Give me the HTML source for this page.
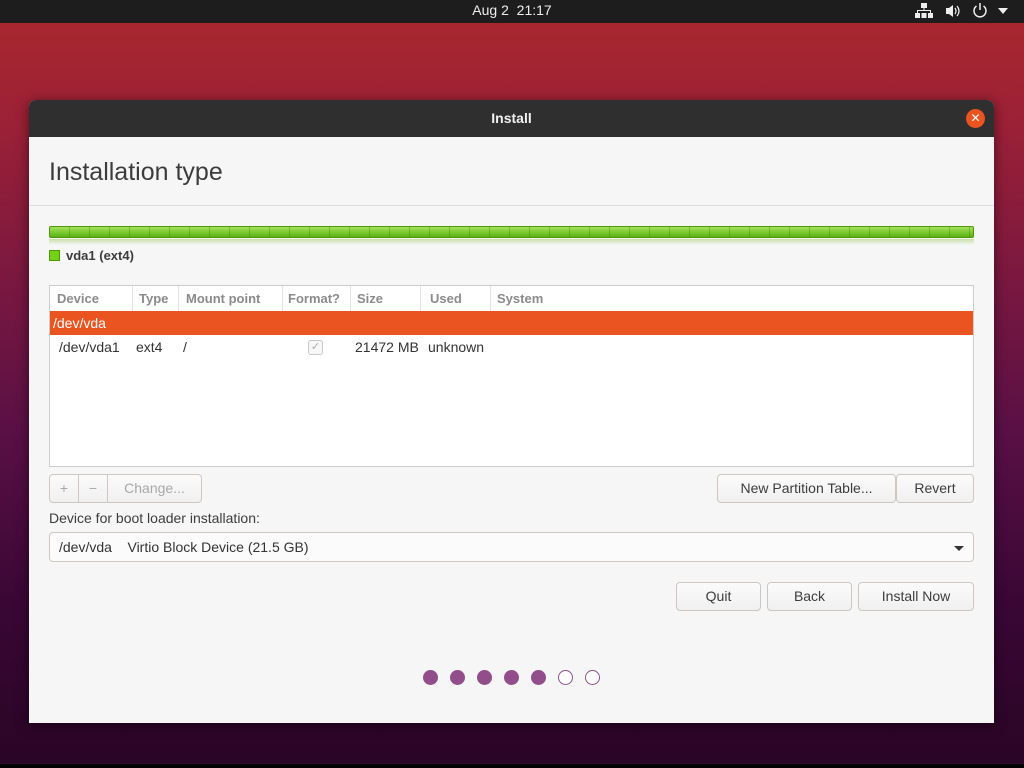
<!DOCTYPE html>
<html><head><meta charset="utf-8"><style>
*{box-sizing:border-box;margin:0;padding:0}
body{width:1024px;height:768px;overflow:hidden;font-family:"Liberation Sans","DejaVu Sans",sans-serif;position:relative;
background:linear-gradient(180deg,#a8272f 24px,#9c2136 120px,#7a1840 280px,#5a1045 430px,#3a0735 600px,#2a0526 760px);}
#top{position:absolute;left:0;top:0;width:1024px;height:23px;background:#1d1d1d;color:#eee;font-size:14px}
#top .clock{position:absolute;left:0;width:1024px;text-align:center;top:2px}
#bot{position:absolute;left:0;top:764px;width:1024px;height:4px;background:#000}
#win{position:absolute;left:29px;top:100px;width:965px;height:623px;background:#f6f6f6;border-radius:7px 7px 0 0;overflow:hidden;box-shadow:0 2px 12px rgba(0,0,0,.5)}
#tb{height:37px;background:#2f2f2f;color:#f0f0f0;font-weight:bold;font-size:14px;text-align:center;line-height:37px;position:relative}
#close{position:absolute;right:9px;top:9px;width:19px;height:19px;border-radius:50%;background:#e95420;color:#fff;font-size:12px;line-height:19px;text-align:center;font-weight:normal}
h1{position:absolute;left:20px;top:58px;font-size:25px;font-weight:normal;color:#3c3c3c}
.hr{position:absolute;left:0;top:105px;width:965px;height:1px;background:#dedede}
#bar{position:absolute;left:20px;top:126px;width:925px;height:12px;border:1px solid #4e9a06;border-radius:2px;
background:repeating-linear-gradient(90deg,transparent 0 19px,rgba(60,120,0,.35) 19px 20px),linear-gradient(#a6e060,#73c72a 60%,#5fae1c)}
#barsh{position:absolute;left:20px;top:139px;width:925px;height:6px;background:linear-gradient(#c7e0a8,rgba(246,246,246,0))}
#leg{position:absolute;left:20px;top:148px;font-size:13px;font-weight:bold;color:#3c3c3c}
#leg span{display:inline-block;width:11px;height:11px;background:#73d216;border:1px solid #4e9a06;vertical-align:-1px;margin-right:6px}
#tbl{position:absolute;left:20px;top:185px;width:925px;height:182px;background:#fff;border:1px solid #cdcdcd;font-size:14px}
.th{height:25px;position:relative;color:#8b8b8b;font-weight:bold;font-size:13px}
.th div{position:absolute;top:5px;height:20px}
.th i{position:absolute;top:0;height:25px;width:1px;background:#e4e4e4}
.sel{height:24px;background:#e95420;color:#fff;padding-left:3px;line-height:24px}
.row{height:24px;position:relative;color:#333;line-height:24px}
.row div{position:absolute;top:0}
.chk{position:absolute;left:258px;top:5px;width:15px;height:15px;border:1px solid #c8c8c8;border-radius:3px;background:#f7f7f7;color:#aaa;font-size:11px;line-height:13px;text-align:center}
.btn{position:absolute;height:29px;border:1px solid #cdc7c2;border-radius:4px;background:linear-gradient(#fbfbfb,#f0f0f0);font-size:14px;color:#3c3c3c;text-align:center;line-height:27px}
.dis{color:#a8a8a8}
#lbl{position:absolute;left:20px;top:410px;font-size:14px;color:#3c3c3c}
#combo{position:absolute;left:20px;top:432px;width:925px;height:30px;border:1px solid #cdc7c2;border-radius:4px;background:#fbfbfb;font-size:14px;color:#333;line-height:28px;padding-left:9px}
#combo b{position:absolute;right:9px;top:13px;border-left:5px solid transparent;border-right:5px solid transparent;border-top:5px solid #333}
.dot{position:absolute;top:570px;width:15px;height:15px;border-radius:50%;background:#924d8b}
.dot.o{background:#fff;border:1px solid #924d8b}
</style></head><body>
<div id="top"><div class="clock">Aug 2&nbsp; 21:17</div>
<svg style="position:absolute;left:915px;top:3px" width="18" height="16" viewBox="0 0 18 16" fill="#eee"><rect x="6" y="0" width="6" height="5"/><rect x="8.5" y="5" width="1" height="3"/><rect x="2" y="7" width="14" height="1"/><rect x="2" y="7" width="1" height="3"/><rect x="15" y="7" width="1" height="3"/><rect x="0" y="10" width="5" height="5"/><rect x="6.5" y="10" width="5" height="5"/><rect x="13" y="10" width="5" height="5"/></svg>
<svg style="position:absolute;left:945px;top:4px" width="16" height="14" viewBox="0 0 16 14" fill="#eee"><path d="M1 4h3l4-3v12l-4-3H1z"/><path d="M10 4q2 3 0 6M12 2q4 5 0 10" stroke="#eee" fill="none" stroke-width="1.2"/></svg>
<svg style="position:absolute;left:972px;top:2px" width="16" height="18" viewBox="0 0 16 18" fill="none" stroke="#eee" stroke-width="1.5"><path d="M8 1v7M4.5 4a6 6 0 1 0 7 0"/></svg>
<svg style="position:absolute;left:998px;top:8px" width="10" height="6" viewBox="0 0 10 6" fill="#eee"><path d="M0 0h10L5 6z"/></svg>
</div>
<div id="win">
<div id="tb">Install<div id="close">✕</div></div>
<h1>Installation type</h1>
<div class="hr"></div>
<div id="bar"></div><div id="barsh"></div>
<div id="leg"><span></span>vda1 (ext4)</div>
<div id="tbl">
<div class="th">
<div style="left:7px">Device</div><i style="left:82px"></i>
<div style="left:89px">Type</div><i style="left:128px"></i>
<div style="left:136px">Mount point</div><i style="left:232px"></i>
<div style="left:238px">Format?</div><i style="left:300px"></i>
<div style="left:307px">Size</div><i style="left:370px"></i>
<div style="left:380px">Used</div><i style="left:440px"></i>
<div style="left:447px">System</div>
</div>
<div class="sel">/dev/vda</div>
<div class="row"><div style="left:9px">/dev/vda1</div><div style="left:86px">ext4</div><div style="left:133px">/</div><span class="chk">✓</span><div style="left:305px">21472 MB</div><div style="left:378px">unknown</div></div>
</div>
<div class="btn dis" style="left:20px;top:374px;width:30px;border-radius:4px 0 0 4px">+</div>
<div class="btn dis" style="left:49px;top:374px;width:30px;border-radius:0">−</div>
<div class="btn dis" style="left:78px;top:374px;width:95px;border-radius:0 4px 4px 0">Change...</div>
<div class="btn" style="left:688px;top:374px;width:179px">New Partition Table...</div>
<div class="btn" style="left:867px;top:374px;width:78px">Revert</div>
<div id="lbl">Device for boot loader installation:</div>
<div id="combo">/dev/vda&nbsp;&nbsp;&nbsp; Virtio Block Device (21.5 GB)<b></b></div>
<div class="btn" style="left:647px;top:482px;width:85px">Quit</div>
<div class="btn" style="left:738px;top:482px;width:85px">Back</div>
<div class="btn" style="left:829px;top:482px;width:116px">Install Now</div>
<div class="dot" style="left:394px"></div>
<div class="dot" style="left:421px"></div>
<div class="dot" style="left:448px"></div>
<div class="dot" style="left:475px"></div>
<div class="dot" style="left:502px"></div>
<div class="dot o" style="left:529px"></div>
<div class="dot o" style="left:556px"></div>
</div>
<div id="bot"></div>
</body></html>
